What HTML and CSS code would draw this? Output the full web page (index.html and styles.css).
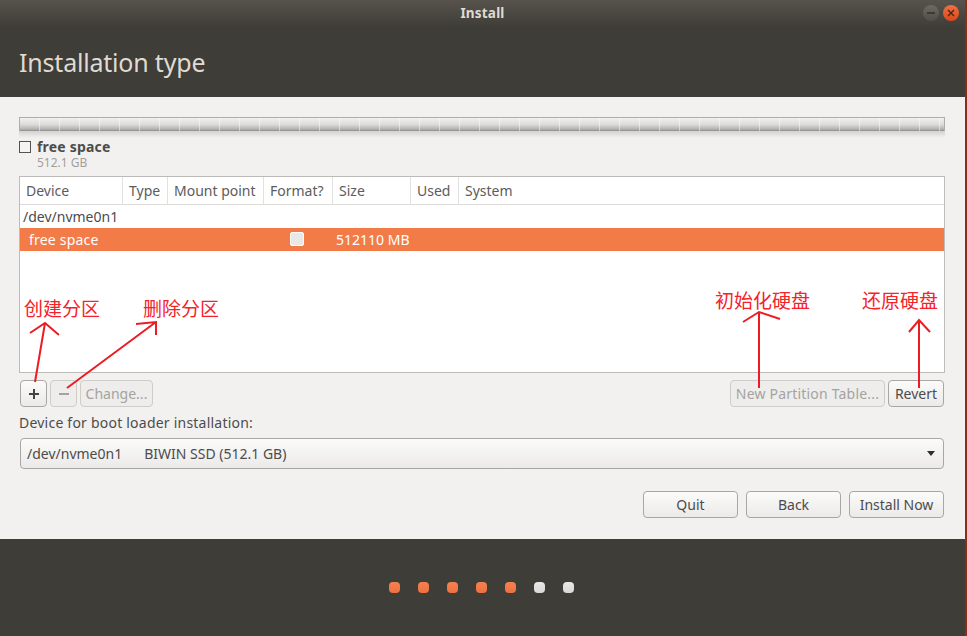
FILE: index.html
```html
<!DOCTYPE html>
<html lang="en">
<head>
    <meta charset="UTF-8">
    <meta name="viewport" content="width=device-width, initial-scale=1.0">
    <title>Install</title>
    <link rel="stylesheet" href="styles.css">
</head>
<body>
    <div class="window">
        <div class="titlebar">
            <span class="title">Install</span>
            <div class="win-buttons">
                <span class="win-btn min"><svg width="10" height="10" viewBox="0 0 10 10"><path d="M1 5h8" stroke="#2f2e2b" stroke-width="1.5"/></svg></span>
                <span class="win-btn close"><svg width="10" height="10" viewBox="0 0 10 10"><path d="M2 2l6 6M8 2l-6 6" stroke="#4a2412" stroke-width="1.4"/></svg></span>
            </div>
        </div>
        <div class="header"><h1>Installation type</h1></div>

        <div class="content">
            <div class="part-bar"></div>
            <div class="legend">
                <span class="legend-box"></span>
                <div>
                    <div class="legend-name">free space</div>
                    <div class="legend-size">512.1 GB</div>
                </div>
            </div>

            <div class="table-box">
                <div class="row head">
                    <div class="c-device">Device</div>
                    <div class="c-type">Type</div>
                    <div class="c-mount">Mount point</div>
                    <div class="c-format">Format?</div>
                    <div class="c-size">Size</div>
                    <div class="c-used">Used</div>
                    <div class="c-system">System</div>
                </div>
                <div class="row disk">/dev/nvme0n1</div>
                <div class="row selected">
                    <div class="c-device">free space</div>
                    <div class="c-type"></div>
                    <div class="c-mount"></div>
                    <div class="c-format"><span class="cell-check"></span></div>
                    <div class="c-size">512110 MB</div>
                </div>
            </div>

            <div class="table-actions">
                <button class="btn icon-btn"><svg width="12" height="12" viewBox="0 0 12 12"><path d="M6 1v10M1 6h10" stroke="#444" stroke-width="2"/></svg></button>
                <button class="btn icon-btn off"><svg width="12" height="12" viewBox="0 0 12 12"><path d="M1 6h10" stroke="#a5a3a0" stroke-width="2"/></svg></button>
                <button class="btn change off">Change...</button>
                <div class="spacer"></div>
                <button class="btn new-table off">New Partition Table...</button>
                <button class="btn revert">Revert</button>
            </div>

            <div class="boot-label">Device for boot loader installation:</div>
            <div class="combo">
                <span class="combo-dev">/dev/nvme0n1</span>
                <span class="combo-name">BIWIN SSD (512.1 GB)</span>
                <span class="combo-arrow"></span>
            </div>

            <div class="nav-buttons">
                <button class="btn nav">Quit</button>
                <button class="btn nav">Back</button>
                <button class="btn nav">Install Now</button>
            </div>

            <!-- red notes drawn on top of the screenshot -->
            <svg class="arrows" width="965" height="636" viewBox="0 0 965 636">
                <g fill="none" stroke="#ed1c24" stroke-width="2">
                    <path d="M35 382L45 323M30 333L45 323L59 335"/>
                    <path d="M67 388L156 322M136 324L156 322L156 335"/>
                    <path d="M759 388V312M743 322L759 312L780 319"/>
                    <path d="M919 388V320M909 332L919 320L930 332"/>
                </g>
            </svg>
            <span class="note note-create">创建分区</span>
            <span class="note note-delete">删除分区</span>
            <span class="note note-init">初始化硬盘</span>
            <span class="note note-revert">还原硬盘</span>
        </div>

        <div class="footer">
            <span class="dot done"></span>
            <span class="dot done"></span>
            <span class="dot done"></span>
            <span class="dot done"></span>
            <span class="dot done"></span>
            <span class="dot"></span>
            <span class="dot"></span>
        </div>
    </div>
</body>
</html>
```

FILE: styles.css
```css
html, body {
    margin: 0;
    padding: 0;
}
body {
    width: 967px;
    height: 636px;
    overflow: hidden;
    background-color: #8f2a1c;
    font-family: "Noto Sans", "Noto Sans CJK SC", sans-serif;
    font-size: 14px;
    color: #4c4c4c;
}
.window {
    position: relative;
    width: 965px;
    height: 636px;
    display: flex;
    flex-direction: column;
    background: #3f3d38;
}
.titlebar {
    height: 27px;
    display: flex;
    align-items: center;
    justify-content: center;
    position: relative;
    background: linear-gradient(#57534c, #3f3d38);
}
.title {
    color: #dfdbd2;
    font-size: 13.5px;
    font-weight: 700;
    letter-spacing: 0.2px;
    margin-top: -2px;
}
.win-buttons {
    position: absolute;
    top: 5px;
    right: 6px;
    display: flex;
    gap: 4px;
}
.win-btn {
    width: 16px;
    height: 16px;
    border-radius: 50%;
    display: flex;
    align-items: center;
    justify-content: center;
}
.win-btn.min {
    background: linear-gradient(#6d6a64, #4f4d48);
}
.win-btn.close {
    background: linear-gradient(#f0703f, #d9481c);
}
.header {
    height: 70px;
    box-sizing: border-box;
    padding: 18px 0 0 19px;
}
h1 {
    margin: 0;
    color: #dfdbd2;
    font-size: 25px;
    line-height: 34px;
    font-weight: 400;
    letter-spacing: -0.2px;
}
.content {
    height: 442px;
    box-sizing: border-box;
    padding: 20px 20px 0 19px;
    background-color: #f2f1f0;
}
.part-bar {
    height: 14px;
    border: 1px solid #aeadaa;
    border-bottom: 0;
    box-sizing: border-box;
    background-image:
        repeating-linear-gradient(90deg, transparent 0, transparent 19px, rgba(255, 255, 255, 0.45) 19px, rgba(255, 255, 255, 0.45) 20px),
        linear-gradient(#f0f0ef, #dcdbd9 50%, #b5b4b2 85%, #8e8d8b);
}
.part-bar::after {
    content: "";
    display: block;
    height: 7px;
    margin: 13px -1px 0;
    background: linear-gradient(rgba(0, 0, 0, 0.13), rgba(0, 0, 0, 0));
}
.legend {
    display: flex;
    gap: 6px;
    margin-top: 8px;
}
.legend-box {
    width: 10px;
    height: 10px;
    margin-top: 2px;
    border: 1px solid #55534f;
    background: #f5f4f3;
}
.legend-name {
    font-weight: 700;
    font-size: 14px;
    line-height: 16px;
    letter-spacing: 0.2px;
    color: #4c4c4c;
}
.legend-size {
    font-size: 12px;
    line-height: 16px;
    color: #a39f9b;
}
.table-box {
    height: 197px;
    margin-top: 5px;
    box-sizing: border-box;
    border: 1px solid #bdbcb9;
    background: #fff;
}
.row {
    display: flex;
    font-size: 14px;
}
.row > div {
    box-sizing: border-box;
    padding-left: 6px;
    white-space: nowrap;
    overflow: hidden;
}
.head {
    height: 28px;
    line-height: 27px;
    border-bottom: 1px solid #dcdbd9;
    color: #5c5c5c;
    box-sizing: border-box;
}
.head > div {
    border-right: 1px solid #e2e1df;
}
.head > div:last-child {
    border-right: 0;
}
.c-device { width: 103px; }
.c-type { width: 45px; }
.c-mount { width: 96px; }
.c-format { width: 69px; }
.c-size { width: 78px; }
.c-used { width: 48px; }
.c-system { flex: 1; }
.disk {
    height: 23px;
    line-height: 23px;
    padding-left: 3px;
    color: #4c4c4c;
}
.selected {
    height: 23px;
    line-height: 23px;
    background: #f37b48;
    color: #fff;
}
.selected .c-device {
    padding-left: 9px;
    letter-spacing: 0.2px;
}
.selected .c-format {
    padding-left: 26px;
}
.selected .c-size {
    padding-left: 3px;
}
.cell-check {
    display: block;
    width: 12px;
    height: 12px;
    margin-top: 4px;
    border: 1px solid #fff;
    border-radius: 2px;
    background: #e9e8e6;
}
.table-actions {
    display: flex;
    gap: 3px;
    margin-top: 7px;
    padding: 0 1px;
}
.spacer {
    flex: 1;
}
.btn {
    height: 27px;
    box-sizing: border-box;
    padding: 0;
    border: 1px solid #a9a7a3;
    border-radius: 4px;
    background: linear-gradient(#fbfbfa, #ebeae8);
    color: #4c4c4c;
    font-family: inherit;
    font-size: 14px;
    display: flex;
    align-items: center;
    justify-content: center;
}
.btn.off {
    background: #eeedec;
    border-color: #cfcdca;
    color: #a5a3a0;
}
.icon-btn { width: 27px; }
.change { width: 73px; }
.new-table {
    width: 155px;
    letter-spacing: 0.2px;
}
.revert { width: 56px; }
.boot-label {
    margin-top: 7px;
    line-height: 18px;
    letter-spacing: 0.22px;
}
.combo {
    height: 31px;
    margin: 6px 1px 0;
    box-sizing: border-box;
    padding-left: 6px;
    display: flex;
    align-items: center;
    gap: 22px;
    border: 1px solid #a9a7a3;
    border-radius: 4px;
    background: linear-gradient(#fbfbfa, #ebeae8);
}
.combo-arrow {
    margin-left: auto;
    margin-right: 8px;
    width: 0;
    height: 0;
    border-left: 4px solid transparent;
    border-right: 4px solid transparent;
    border-top: 5px solid #2e2e2e;
}
.nav-buttons {
    display: flex;
    justify-content: flex-end;
    gap: 8px;
    margin-top: 22px;
    padding-right: 1px;
}
.nav {
    width: 95px;
}
.arrows {
    position: absolute;
    top: 0;
    left: 0;
    pointer-events: none;
}
.note {
    position: absolute;
    color: #f5222a;
    font-family: "Noto Sans CJK SC", sans-serif;
    font-size: 19px;
    line-height: 22px;
}
.note-create { left: 24px; top: 297px; }
.note-delete { left: 143px; top: 297px; }
.note-init { left: 715px; top: 289px; }
.note-revert { left: 862px; top: 289px; }
.footer {
    flex: 1;
    display: flex;
    justify-content: center;
    gap: 18px;
    padding: 43px 2px 0 0;
    box-sizing: border-box;
}
.dot {
    width: 11px;
    height: 11px;
    border-radius: 4px;
    background: linear-gradient(#e8e8e7, #d8d8d7);
}
.dot.done {
    background: linear-gradient(#f58250, #ef7040);
}
```
